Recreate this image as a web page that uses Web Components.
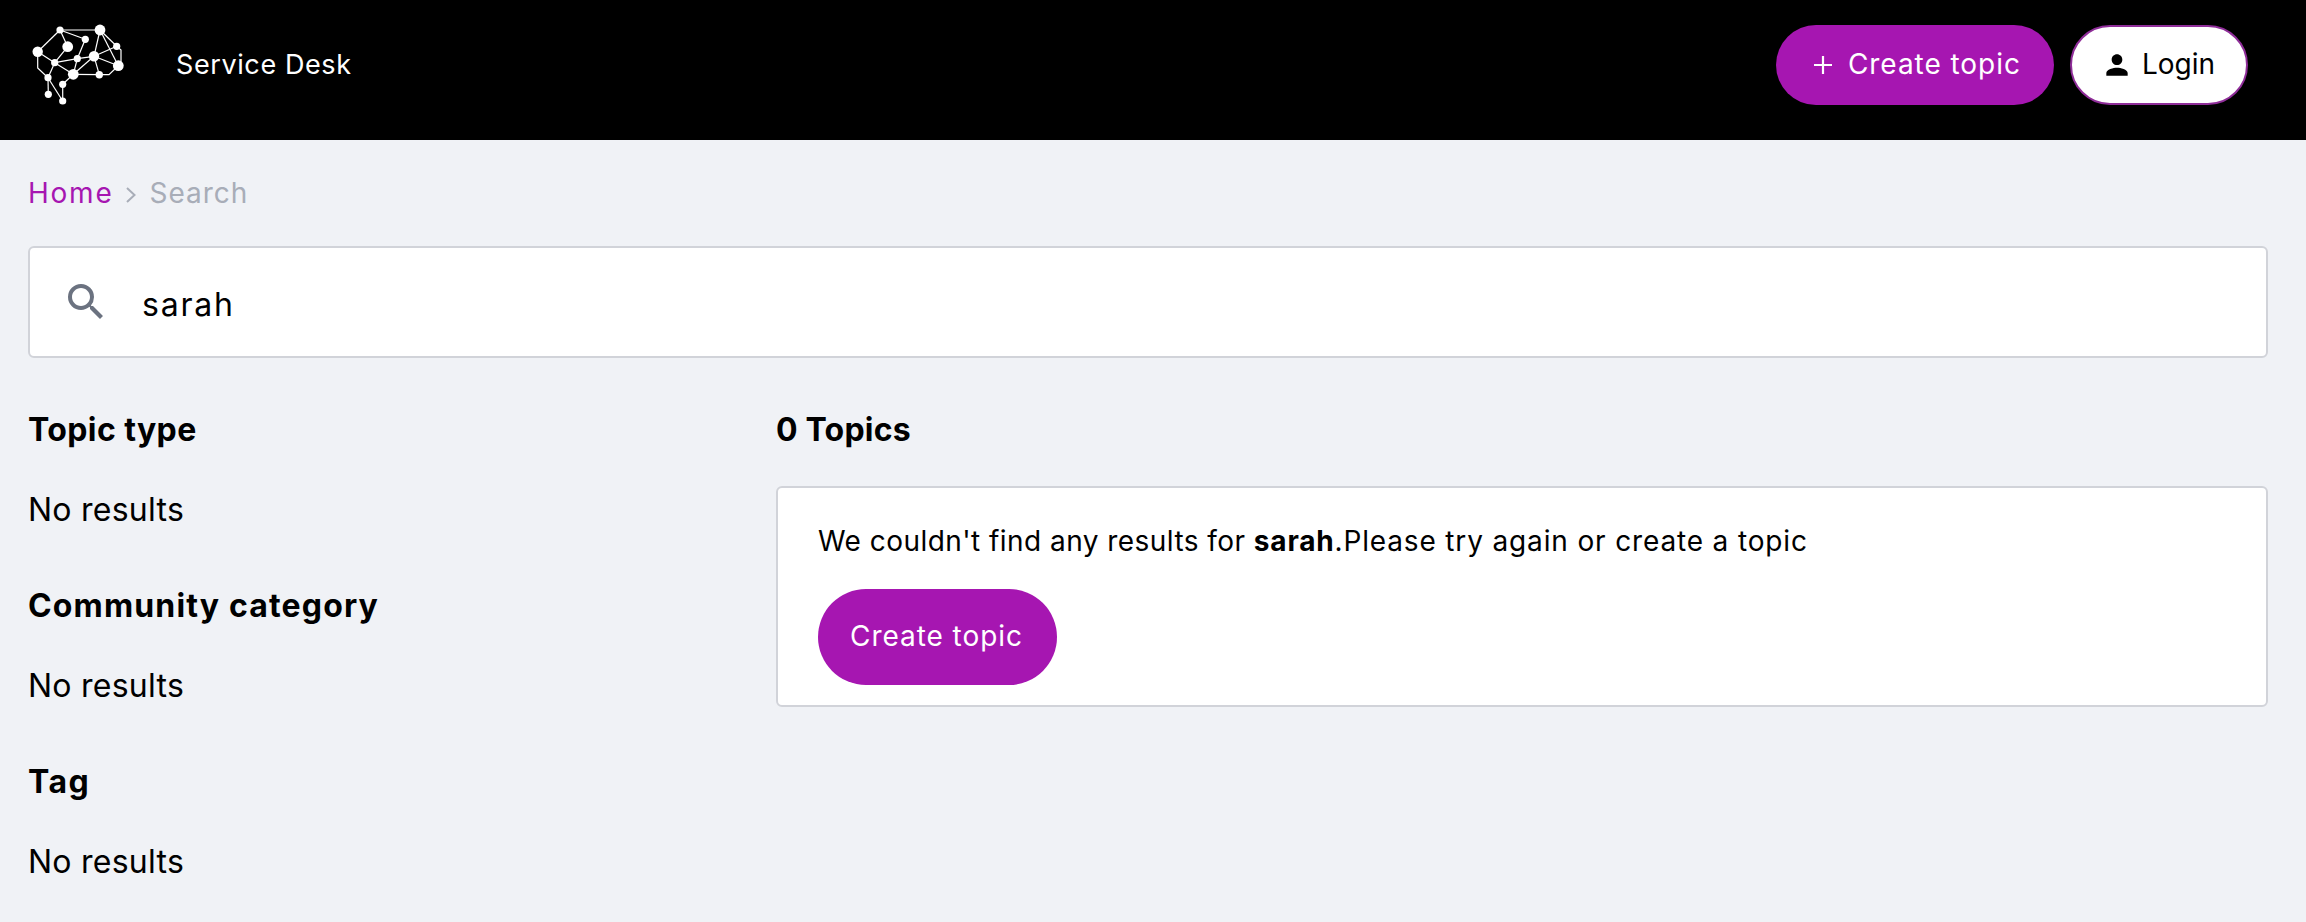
<!DOCTYPE html>
<html lang="en">
<head>
<meta charset="utf-8">
<title>Service Desk</title>
<style>
    html, body { margin: 0; padding: 0; }
    body {
        background: #f0f2f6;
        color: #000;
        font-family: 'Inter', 'Liberation Sans', sans-serif;
        min-height: 922px;
        overflow: hidden;
    }
</style>
</head>
<body>
<sd-header></sd-header>
<sd-page>
    <sd-breadcrumb></sd-breadcrumb>
    <sd-search query="sarah"></sd-search>
    <sd-columns>
        <div slot="side">
            <sd-filter title="Topic type" style="--title-spacing: 0.4px"></sd-filter>
            <sd-filter title="Community category" style="--title-spacing: 1.15px"></sd-filter>
            <sd-filter title="Tag" style="--title-spacing: 1.4px"></sd-filter>
        </div>
        <sd-results slot="main" query="sarah"></sd-results>
    </sd-columns>
</sd-page>

<script>
const nodes = [
    [60, 30, 3.6], [100, 30, 5.4], [85.3, 39.3, 3.6], [116.7, 46.3, 3.6],
    [67.7, 46.7, 5.4], [37.7, 51.7, 5.2], [94, 56.3, 5.2], [77.3, 58.7, 3.6],
    [54.7, 62.7, 3.6], [118.3, 65.7, 5.4], [73.3, 74.3, 5.4], [99.3, 74.7, 3.7],
    [48, 77.7, 3.6], [62.7, 84.3, 3.6], [48.3, 94.3, 3.6], [62.7, 101, 3.6]
];
// pairs of node indexes, the bent outlines are polylines below
const edges = [
    [0, 1], [0, 2], [0, 5], [0, 4], [2, 7], [1, 6], [1, 3], [1, 9], [3, 6], [6, 9],
    [4, 8], [5, 8], [8, 7], [7, 6], [7, 10], [8, 10], [6, 10], [6, 11], [10, 11],
    [8, 12], [12, 15], [12, 14], [13, 15], [13, 10]
];
const logoSvg = `
    <svg width="100" height="90" viewBox="28 20 100 90" aria-hidden="true">
        <g stroke="#fff" stroke-width="1.2" fill="none">
            ${edges.map(([a, b]) => `<line x1="${nodes[a][0]}" y1="${nodes[a][1]}" x2="${nodes[b][0]}" y2="${nodes[b][1]}"/>`).join('')}
            <polyline points="37.7,51.7 37.7,68 48,77.7"/>
            <polyline points="116.7,46.3 121,50 121,62"/>
            <polyline points="99.3,74.7 109,74.7 118.3,65.7"/>
        </g>
        <g fill="#fff">
            ${nodes.map(([x, y, r]) => `<circle cx="${x}" cy="${y}" r="${r}"/>`).join('')}
        </g>
    </svg>`;

class SdButton extends HTMLElement {
    constructor() {
        super();
        this.attachShadow({ mode: 'open' });
        this.shadowRoot.innerHTML = `
            <style>
                :host {
                    display: inline-flex;
                    align-items: center;
                    justify-content: center;
                    box-sizing: border-box;
                    background: #a616b1;
                    color: #fff;
                    border-radius: 48px;
                    height: 80px;
                    padding: 0 33px 2px 31px;
                    font-size: 28px;
                    letter-spacing: 0.95px;
                    white-space: nowrap;
                }
                :host([variant="light"]) {
                    background: #fff;
                    color: #000;
                    border: 2px solid #8f2d99;
                    padding: 0 31px 2px 29px;
                    letter-spacing: 0;
                }
                :host([size="large"]) {
                    height: 96px;
                    padding: 0 34px 2px 32px;
                }
                ::slotted(svg) { margin: 2px 9px 0 0; flex: none; }
            </style>
            <slot name="icon"></slot><slot></slot>
        `;
    }
}

class SdHeader extends HTMLElement {
    constructor() {
        super();
        this.attachShadow({ mode: 'open' });
        this.shadowRoot.innerHTML = `
            <style>
                :host {
                    display: flex;
                    align-items: center;
                    box-sizing: border-box;
                    height: 140px;
                    padding: 0 58px 10px 28px;
                    background: #000;
                    color: #fff;
                }
                .logo { display: flex; }
                .name {
                    margin-left: 48px;
                    padding-bottom: 2px;
                    font-size: 27px;
                    letter-spacing: 0.6px;
                }
                .actions {
                    margin-left: auto;
                    display: flex;
                    gap: 16px;
                }
            </style>
            <div class="logo">${logoSvg}</div>
            <div class="name">Service Desk</div>
            <div class="actions">
                <sd-button>
                    <svg slot="icon" width="32" height="32" viewBox="0 0 32 32" aria-hidden="true">
                        <path d="M16 7v18M7 16h18" stroke="#fff" stroke-width="2.2" fill="none"/>
                    </svg>
                    Create topic
                </sd-button>
                <sd-button variant="light">
                    <svg slot="icon" width="32" height="32" viewBox="0 0 24 24" aria-hidden="true">
                        <path fill="#000" d="M12 12c2.21 0 4-1.79 4-4s-1.79-4-4-4-4 1.79-4 4 1.79 4 4 4zm0 2c-2.67 0-8 1.34-8 4v2h16v-2c0-2.66-5.33-4-8-4z"/>
                    </svg>
                    Login
                </sd-button>
            </div>
        `;
    }
}

class SdPage extends HTMLElement {
    constructor() {
        super();
        this.attachShadow({ mode: 'open' });
        this.shadowRoot.innerHTML = `
            <style>
                :host {
                    display: block;
                    padding: 0 38px 0 28px;
                }
            </style>
            <slot></slot>
        `;
    }
}

class SdBreadcrumb extends HTMLElement {
    constructor() {
        super();
        this.attachShadow({ mode: 'open' });
        this.shadowRoot.innerHTML = `
            <style>
                :host {
                    display: flex;
                    align-items: center;
                    height: 106px;
                    font-size: 28px;
                }
                .home { color: #a616b1; letter-spacing: 1.75px; }
                .current { color: #a8adb8; letter-spacing: 1px; }
                svg { margin: 4px 11px 0 11px; }
            </style>
            <span class="home">Home</span>
            <svg width="14" height="18" viewBox="0 0 14 18" aria-hidden="true">
                <path d="M3 2l7.5 7L3 16" stroke="#a8adb8" stroke-width="2" fill="none"/>
            </svg>
            <span class="current">Search</span>
        `;
    }
}

class SdSearch extends HTMLElement {
    constructor() {
        super();
        this.attachShadow({ mode: 'open' });
        this.shadowRoot.innerHTML = `
            <style>
                :host {
                    display: flex;
                    align-items: center;
                    box-sizing: border-box;
                    height: 112px;
                    padding-left: 32px;
                    background: #fff;
                    border: 2px solid #d1d3d9;
                    border-radius: 6px;
                    font-size: 32px;
                    letter-spacing: 1.8px;
                }
                svg { flex: none; margin-right: 32px; }
                span { padding-top: 5px; }
            </style>
            <svg width="48" height="48" viewBox="0 0 24 24" aria-hidden="true">
                <path fill="#6b7280" d="M15.5 14h-.79l-.28-.27A6.471 6.471 0 0 0 16 9.5 6.5 6.5 0 1 0 9.5 16c1.61 0 3.09-.59 4.23-1.57l.27.28v.79l5 4.99L20.49 19l-4.99-5zm-6 0C7.01 14 5 11.99 5 9.5S7.01 5 9.5 5 14 7.01 14 9.5 11.99 14 9.5 14z"/>
            </svg>
            <span>${this.getAttribute('query')}</span>
        `;
    }
}

class SdColumns extends HTMLElement {
    constructor() {
        super();
        this.attachShadow({ mode: 'open' });
        this.shadowRoot.innerHTML = `
            <style>
                :host {
                    display: grid;
                    grid-template-columns: 748px 1fr;
                    margin-top: 48px;
                }
            </style>
            <slot name="side"></slot>
            <slot name="main"></slot>
        `;
    }
}

class SdFilter extends HTMLElement {
    constructor() {
        super();
        this.attachShadow({ mode: 'open' });
        this.shadowRoot.innerHTML = `
            <style>
                :host {
                    display: block;
                    box-sizing: border-box;
                    height: 176px;
                    padding-top: 4px;
                }
                .title {
                    font-size: 32px;
                    font-weight: 700;
                    line-height: 40px;
                    letter-spacing: var(--title-spacing, 0);
                    margin-bottom: 40px;
                }
                .body {
                    font-size: 32px;
                    line-height: 40px;
                    letter-spacing: 0.25px;
                }
            </style>
            <div class="title">${this.getAttribute('title')}</div>
            <div class="body">No results</div>
        `;
    }
}

class SdResults extends HTMLElement {
    constructor() {
        super();
        this.attachShadow({ mode: 'open' });
        this.shadowRoot.innerHTML = `
            <style>
                :host { display: block; }
                .count {
                    font-size: 32px;
                    font-weight: 700;
                    line-height: 40px;
                    letter-spacing: 0.2px;
                    padding-top: 4px;
                    margin-bottom: 36px;
                }
                .card {
                    box-sizing: border-box;
                    height: 221px;
                    padding: 38px 40px 0;
                    background: #fff;
                    border: 2px solid #d1d3d9;
                    border-radius: 6px;
                }
                .text {
                    font-size: 28px;
                    line-height: 30px;
                    letter-spacing: 0.45px;
                    margin-bottom: 33px;
                }
                b { letter-spacing: 0.8px; }
                .rest { letter-spacing: 0.85px; }
            </style>
            <div class="count">0 Topics</div>
            <div class="card">
                <div class="text">We couldn't find any results for <b>${this.getAttribute('query')}</b><span class="rest">.Please try again or create a topic</span></div>
                <sd-button size="large">Create topic</sd-button>
            </div>
        `;
    }
}

customElements.define('sd-button', SdButton);
customElements.define('sd-header', SdHeader);
customElements.define('sd-page', SdPage);
customElements.define('sd-breadcrumb', SdBreadcrumb);
customElements.define('sd-search', SdSearch);
customElements.define('sd-columns', SdColumns);
customElements.define('sd-filter', SdFilter);
customElements.define('sd-results', SdResults);
</script>
</body>
</html>
